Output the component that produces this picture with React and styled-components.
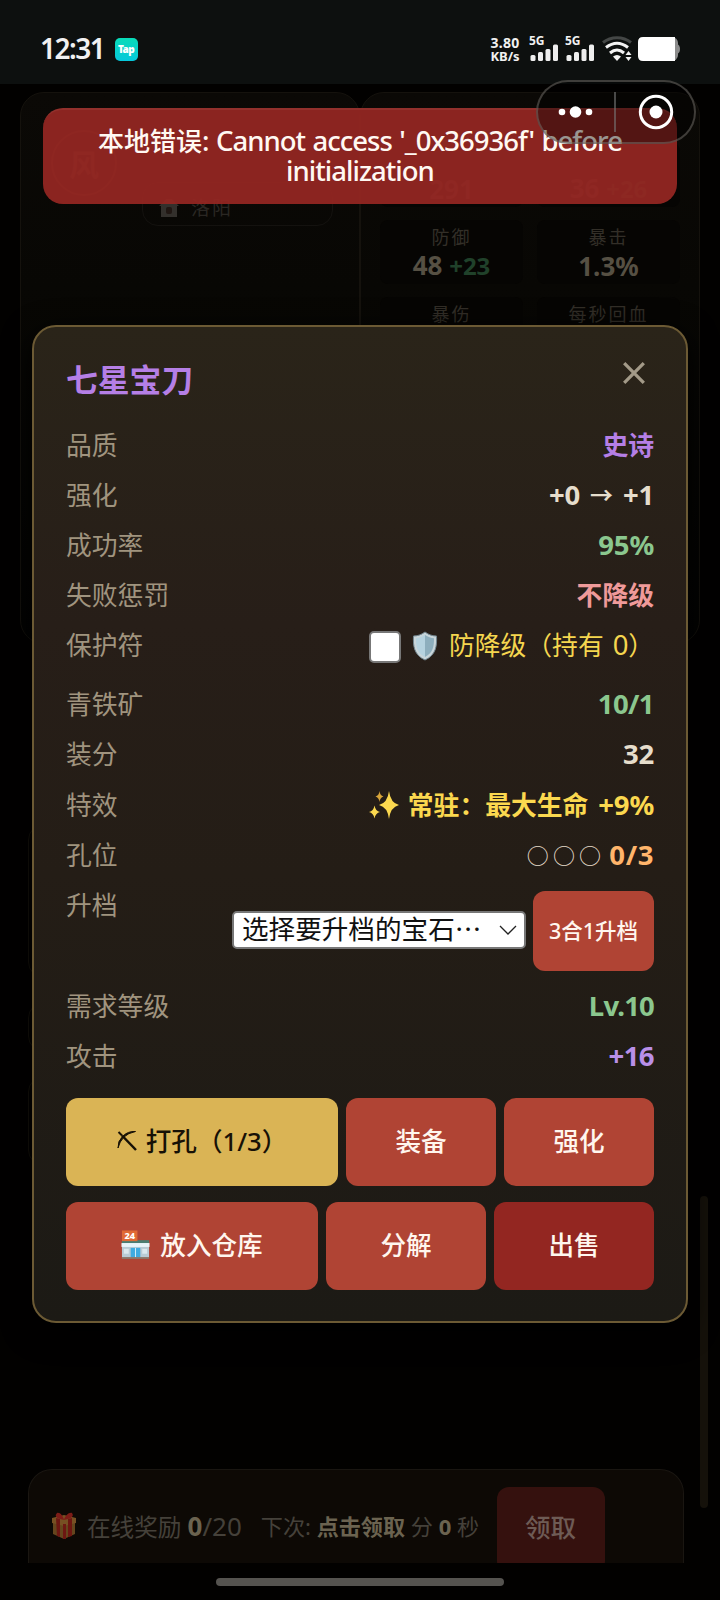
import React from "react";
import styled, { createGlobalStyle } from "styled-components";

const Global = createGlobalStyle`
  * { box-sizing: border-box; }
  body { margin: 0; background: #020100; }
  body, button { font-family: "Noto Sans", "Noto Sans CJK SC", sans-serif; }
`;

const Screen = styled.div`
  position: relative;
  display: flex;
  flex-direction: column;
  width: 720px;
  height: 1600px;
  overflow: hidden;
  background: #020100;
  color: #e6ddcc;
`;

/* ---------- status bar ---------- */
const StatusBar = styled.header`
  flex: none;
  display: flex;
  align-items: center;
  height: 84px;
  padding: 14px 40px 0 40px;
  background: #0d100f;
  color: #f1f1f1;
`;
const Clock = styled.span`
  width: 74.5px;
  font-size: 28px;
  line-height: 28px;
  margin-top: -2px;
  font-weight: 600;
  letter-spacing: -1.5px;
  white-space: nowrap;
`;
const TapBadge = styled.span`
  display: flex;
  align-items: center;
  justify-content: center;
  width: 23px;
  height: 23px;
  border-radius: 5px;
  background: linear-gradient(#08dcb8, #06c8dc);
  color: #fff;
  font-size: 10px;
  font-weight: 900;
  letter-spacing: -0.6px;
`;
const StatusRight = styled.div`
  display: flex;
  align-items: center;
  margin-left: auto;
`;
const NetSpeed = styled.span`
  display: flex;
  flex-direction: column;
  align-items: center;
  gap: 1px;
  width: 34px;
  margin-right: 7px;
  font-size: 13px;
  font-weight: 700;
  line-height: 13px;
  white-space: nowrap;
`;
const SpeedValue = styled.span`
  font-size: 14px;
  letter-spacing: 0.2px;
`;
const Signal = styled.div`
  display: flex;
  flex-direction: column;
  width: 30px;
  height: 28px;
  margin-right: 6px;
  font-size: 12px;
  font-weight: 700;
  line-height: 11px;
`;
const SignalSvg = styled.svg`
  width: 30px;
  height: 18px;
  margin-top: -2px;
`;
const WifiSvg = styled.svg`
  width: 32px;
  height: 26px;
  margin-right: 4px;
`;
const BatterySvg = styled.svg`
  width: 43px;
  height: 26px;
`;

/* ---------- dimmed page behind the dialog ---------- */
const Page = styled.main`
  flex: 1;
  min-height: 0;
  display: flex;
  flex-direction: column;
  padding: 8px 20px 0;
  overflow: hidden;
`;
const TopCards = styled.div`
  display: grid;
  grid-template-columns: 1fr 1fr;
  height: 552px;
`;
const DimCard = styled.section`
  border: 1.5px solid #15120d;
  border-radius: 24px;
  background: linear-gradient(#0b0906, #080704 35%, #030302);
`;
const Profile = styled(DimCard)`
  padding: 37px 26px 0 30px;
  display: flex;
  gap: 25px;
`;
const Avatar = styled.span`
  display: flex;
  align-items: center;
  justify-content: center;
  width: 66px;
  height: 66px;
  border: 2px solid #33271a;
  border-radius: 50%;
  color: #40352a;
  font-size: 30px;
  font-weight: 700;
`;
const ProfileInfo = styled.div`
  flex: 1;
  display: flex;
  flex-direction: column;
  justify-content: flex-end;
  height: 96px;
`;
const CityPill = styled.div`
  display: flex;
  align-items: center;
  gap: 12px;
  height: 44px;
  padding: 7px 16px 0;
  border: 1.5px solid #14120f;
  border-radius: 16px;
  color: #2a2723;
  font-size: 19px;
  line-height: 24px;
  letter-spacing: 2px;
`;
const Stats = styled(DimCard)`
  display: grid;
  grid-template-columns: 143px 143px;
  grid-auto-rows: 64px;
  align-content: start;
  justify-content: center;
  gap: 13px 14px;
  padding-top: 50px;
`;
const StatTile = styled.div`
  display: flex;
  flex-direction: column;
  height: 64px;
  border-radius: 8px;
  background: #060503;
  text-align: center;
`;
const StatLabel = styled.div`
  padding-top: 5px;
  color: #332f28;
  font-size: 18px;
  line-height: 24px;
  letter-spacing: 2px;
`;
const StatValue = styled.div`
  margin-top: auto;
  padding-bottom: 2px;
  color: ${(p) => (p.$dim ? "#403a31" : "#565043")};
  font-size: 26px;
  font-weight: 700;
  line-height: 32px;
`;
const Bonus = styled.span`
  color: #20412a;
  font-size: 24px;
`;
const BagList = styled.div`
  display: flex;
  flex-direction: column;
  gap: 24px;
  margin: 180px 28px 0 8px;
`;
const BagSlot = styled.div`
  height: ${(p) => p.$h}px;
  border: 1px solid #17130c;
  border-radius: 16px;
`;
const RewardBar = styled.section`
  flex: none;
  display: flex;
  align-items: flex-start;
  height: 94px;
  margin: auto 16px 37px 8px;
  padding: 17px 22px 0 22px;
  border: 1.5px solid #1a1611;
  border-bottom: 0;
  border-radius: 24px 24px 0 0;
  background: #0d0905;
  color: #45413a;
  overflow: hidden;
`;
const RewardText = styled.span`
  margin-left: ${(p) => p.$ml || 0}px;
  font-size: ${(p) => p.$size}px;
  line-height: 79px;
  white-space: nowrap;
`;
const RewardNum = styled.span`
  font-size: 26px;
`;
const Strong = styled.b`
  color: #6b6350;
`;
const ClaimButton = styled.button`
  width: 108px;
  height: 86px;
  margin-left: auto;
  margin-right: 56.5px;
  border: 0;
  border-radius: 12px;
  background: #35110e;
  color: #6e5b55;
  font-size: 25.5px;
  font-weight: 500;
  padding: 0 0 10px 0;
`;
const ScrollThumb = styled.div`
  position: absolute;
  left: 700px;
  top: 1196px;
  width: 8px;
  height: 312px;
  border-radius: 4px;
  background: #15110a;
`;
const HomeIndicator = styled.div`
  position: absolute;
  left: 216px;
  bottom: 14px;
  width: 288px;
  height: 8px;
  border-radius: 4px;
  background: #55534f;
`;

/* ---------- toast and host capsule ---------- */
const Toast = styled.div`
  position: absolute;
  left: 43px;
  top: 108px;
  width: 634px;
  height: 96px;
  padding-top: 15.5px;
  border-top: 2px solid #93302c;
  border-radius: 20px;
  background: rgba(148, 38, 34, 0.94);
  color: #fff8f2;
  font-size: 26px;
  font-weight: 500;
  text-align: center;
`;
const ToastLine = styled.div`
  height: 30.5px;
  line-height: 30px;
  white-space: nowrap;
`;
const ToastLatin = styled.span`
  font-size: 27.5px;
  letter-spacing: -0.98px;
  word-spacing: 1.2px;
`;
const Capsule = styled.div`
  position: absolute;
  left: 536px;
  top: 80px;
  display: flex;
  align-items: center;
  width: 160px;
  height: 64px;
  border: 2px solid rgba(120, 115, 110, 0.5);
  border-radius: 32px;
  background: rgba(0, 0, 0, 0.4);
`;

/* ---------- dialog ---------- */
const Dialog = styled.section`
  position: absolute;
  left: 32px;
  top: 325px;
  width: 656px;
  height: 998px;
  padding: 30px 32px 0;
  border: 2px solid #6c5a34;
  border-radius: 24px;
  background: linear-gradient(#2a2419, #271e18 30%, #241d16 55%, #1c1a15);
  box-shadow: 0 8px 30px #000;
`;
const DialogHead = styled.div`
  display: flex;
  justify-content: space-between;
  height: 62.5px;
`;
const Title = styled.h2`
  margin: 0;
  color: #b57fe6;
  font-size: 31.8px;
  font-weight: 700;
  line-height: 46.5px;
`;
const CloseSvg = styled.svg`
  width: 22px;
  height: 22px;
  margin: 5px 9px 0 0;
`;
const Row = styled.div`
  display: flex;
  justify-content: space-between;
  height: ${(p) => p.$h || 50.2}px;
  font-size: 25.8px;
  line-height: 50px;
  white-space: nowrap;
`;
const Label = styled.span`
  color: #a0947f;
`;
const Value = styled.span`
  display: flex;
  align-items: center;
  height: 50px;
  color: ${(p) => p.$color || "#e6ddcc"};
  font-weight: ${(p) => p.$weight || 700};
`;
const Num = styled.span`
  font-size: 27.5px;
  letter-spacing: ${(p) => p.$ls ?? -0.2}px;
  word-spacing: ${(p) => p.$ws || 0}px;
  white-space: pre;
`;
const Arrow = styled.span`
  width: 43px;
  font-size: 23px;
  text-align: center;
`;
const Check = styled.span`
  width: 32px;
  height: 32px;
  margin-top: 4px;
  border: 2px solid #777;
  border-radius: 5px;
  background: #fff;
`;
const Slots = styled.span`
  margin: -2px 4px 0 0;
  color: #e6ddcc;
  font-family: "Noto Sans CJK SC", sans-serif;
  font-size: 22px;
  font-weight: 400;
  letter-spacing: 4.2px;
`;
const UpgradeControls = styled.div`
  display: flex;
  align-items: center;
  gap: 7px;
  height: 102px;
`;
const GemSelect = styled.div`
  display: flex;
  align-items: center;
  justify-content: space-between;
  width: 294px;
  height: 38px;
  margin-top: -3px;
  padding: 0 7px 0 8px;
  border: 2px solid #777;
  border-radius: 5px;
  background: #fff;
  color: #111;
  font-family: "Noto Sans CJK SC", sans-serif;
  font-size: 26.6px;
  line-height: 32px;
`;
const GemText = styled.span`
  margin-top: -4px;
`;
const Actions = styled.div`
  display: flex;
  gap: 8px;
  margin-bottom: 16px;
`;
const tones = {
  red: ["#b04434", "#fff6ee"],
  dark: ["#932621", "#fff6ee"],
  gold: ["#dab455", "#171106"],
};
const Button = styled.button`
  display: flex;
  align-items: center;
  justify-content: center;
  gap: 8px;
  width: ${(p) => p.$w}px;
  height: ${(p) => p.$h || 88}px;
  padding: 0 0 4px;
  border: 0;
  border-radius: 12px;
  background: ${(p) => tones[p.$tone || "red"][0]};
  color: ${(p) => tones[p.$tone || "red"][1]};
  font-size: ${(p) => p.$size || 25.6}px;
  font-weight: 500;
  white-space: nowrap;
`;
const Icon = styled.svg`
  flex: none;
  width: ${(p) => p.$w}px;
  height: ${(p) => p.$h}px;
  margin: ${(p) => p.$m || "0"};
`;

const SignalMeter = () => (
  <Signal>
    5G
    <SignalSvg viewBox="0 0 30 18" fill="#eee">
      <rect x="1.5" y="11" width="5" height="6" rx="1.5" />
      <rect x="9" y="8" width="5" height="9" rx="1.5" />
      <rect x="16.5" y="5" width="5" height="12" rx="1.5" />
      <rect x="24" y="0.500" width="5" height="16.500" rx="1.5" />
    </SignalSvg>
  </Signal>
);

const Wifi = () => (
  <WifiSvg viewBox="0 0 32 26" fill="none" strokeWidth="3">
    <path d="M2 6.5C10 0 22 0 30 6.5" stroke="#444746" />
    <path d="M5 11.5Q16 3 27 11.5" stroke="#f3f3f3" />
    <path d="M9 17Q16 11 23 17" stroke="#f3f3f3" />
    <path d="M12 20.500Q16 17.500 20 20.500L16 25Z" fill="#f3f3f3" />
    <path d="M24.5 19L27.5 15L30.5 19ZM24.5 21L27.5 25L30.5 21Z" fill="#f3f3f3" />
  </WifiSvg>
);

const Battery = () => (
  <BatterySvg viewBox="0 0 43 26">
    <rect x="5" y="1" width="36" height="24" rx="6" fill="#8c8c8c" />
    <path d="M40 8q3 1 3 5t-3 5z" fill="#8c8c8c" />
    <path d="M6 1H38V25H6q-5 0-5-5V6q0-5 5-5Z" fill="#fff" />
  </BatterySvg>
);

const Shield = () => (
  <Icon $w={26} $h={30} $m="1px 11px 0 11px" viewBox="0 0 26 30">
    <path d="M13 1C9 4 5 5 1.5 5C1 15 2 24 13 29C24 24 25 15 24.500 5C21 5 17 4 13 1Z" fill="#c8d5da" stroke="#71858f" strokeWidth="1" />
    <path d="M13 4C10 6 7 7 4 7.300C4 16 5 22 13 26Z" fill="#b5d2df" />
    <path d="M13 4C16 6 19 7 22 7.300C22 16 21 22 13 26Z" fill="#8daebd" />
  </Icon>
);

const Sparkles = () => (
  <Icon $w={30} $h={30} $m="0 9px 0 0" viewBox="0 0 30 30" fill="#fbd84f">
    <path d="M20 1Q21.500 13 30 15Q21.500 17 20 29Q18.500 17 10 15Q18.500 13 20 1Z" />
    <path d="M10.500 1Q11 5.500 14.500 6.500Q11 7.500 10.500 12Q10 7.500 6.500 6.500Q10 5.500 10.500 1Z" fill="#d8a53a" />
    <path d="M5.500 15.500Q6.500 21 11 22Q6.500 23 5.500 28.500Q4.500 23 0 22Q4.500 21 5.500 15.500Z" />
  </Icon>
);

const Pickaxe = () => (
  <Icon $w={21} $h={21} viewBox="0 0 21 21" fill="none" stroke="#171106">
    <path d="M5 5.500L19 20" strokeWidth="2.500" />
    <path d="M1.500 2L5 5.500" strokeWidth="2" />
    <path d="M1 18Q.5 11 6 6Q11 1 18.500 1.500Q11 3 7 7Q2.500 11.500 1 18Z" fill="#171106" strokeWidth="1" />
  </Icon>
);

const Store = () => (
  <Icon $w={29} $h={30} $m="2px 2px 0 0" viewBox="0 0 30 30">
    <rect x="1" y="12" width="28" height="17" fill="#b9cbd5" />
    <rect x="1" y="10" width="28" height="3" fill="#4b7d72" />
    <rect x="0.500" y="13" width="29" height="4" fill="#e8f4fa" />
    <rect x="10" y="18" width="10" height="10" fill="#3fabe0" />
    <path d="M15 18v10" stroke="#d6edf7" />
    <rect x="3" y="19" width="5" height="5" fill="#dbe8ee" />
    <rect x="22" y="19" width="5" height="5" fill="#dbe8ee" />
    <rect x="1" y="27.500" width="28" height="2" fill="#8b7568" />
    <rect x="1" y="0" width="16" height="11" fill="#e06a35" />
    <text x="9" y="8.800" fontSize="9.500" fontWeight="800" textAnchor="middle" fill="#fff" fontFamily="Noto Sans">24</text>
  </Icon>
);

const Gift = () => (
  <Icon $w={26} $h={28} $m="25px 10px 0 0" viewBox="0 0 26 28">
    <path d="M2 9L13 12L24 9V22L13 27L2 22Z" fill="#65451d" />
    <path d="M1 6L13 3L25 6V11L13 14L1 11Z" fill="#775023" />
    <path d="M5 6L9 7V25L6 24ZM17 7L21 6V24L17 25ZM12 12h3v15h-3z" fill="#6d1712" />
    <path d="M13 8C8 7 2 5 6 1C9 0 12 4 13 8C14 4 18 0 21 1C24 5 18 7 13 8Z" fill="#7d1c17" />
  </Icon>
);

const House = () => (
  <svg width="20" height="20" viewBox="0 0 20 20">
    <path d="M0 8L7 1H13L20 8H18V19H2V8Z" fill="#33302c" />
    <rect x="7" y="9" width="6" height="7" rx="2" fill="#211713" />
  </svg>
);

const stats = [
  { id: "hp", value: "291", dim: true },
  { id: "atk", value: "36", bonus: "+26", dim: true },
  { id: "def", label: "防御", value: "48", bonus: "+23" },
  { id: "crit", label: "暴击", value: "1.3%" },
  { id: "critDamage", label: "暴伤" },
  { id: "regen", label: "每秒回血" },
];

export default function App() {
  return (
    <Screen>
      <Global />
      <StatusBar>
        <Clock>12:31</Clock>
        <TapBadge>Tap</TapBadge>
        <StatusRight>
          <NetSpeed>
            <SpeedValue>3.80</SpeedValue>
            <span>KB/s</span>
          </NetSpeed>
          <SignalMeter />
          <SignalMeter />
          <Wifi />
          <Battery />
        </StatusRight>
      </StatusBar>

      <Page>
        <TopCards>
          <Profile>
            <Avatar>风</Avatar>
            <ProfileInfo>
              <CityPill><House />洛阳</CityPill>
            </ProfileInfo>
          </Profile>
          <Stats>
            {stats.map(({ id, label, value, bonus, dim }) => (
              <StatTile key={id}>
                {label && <StatLabel>{label}</StatLabel>}
                {value && (
                  <StatValue $dim={dim}>
                    {value} {bonus && <Bonus>{bonus}</Bonus>}
                  </StatValue>
                )}
              </StatTile>
            ))}
          </Stats>
        </TopCards>
        <BagList>
          <BagSlot $h={154} />
          <BagSlot $h={50} />
          <BagSlot $h={90} />
        </BagList>
        <RewardBar>
          <Gift />
          <RewardText $size={23.6}>在线奖励 <RewardNum><Strong>0</Strong>/20</RewardNum></RewardText>
          <RewardText $size={22.1} $ml={19}>下次: <Strong>点击领取</Strong> 分 <Strong>0</Strong> 秒</RewardText>
          <ClaimButton>领取</ClaimButton>
        </RewardBar>
      </Page>
      <ScrollThumb />
      <HomeIndicator />

      <Toast>
        <ToastLine>本地错误<ToastLatin>: Cannot access '_0x36936f' before</ToastLatin></ToastLine>
        <ToastLine><ToastLatin>initialization</ToastLatin></ToastLine>
      </Toast>
      <Capsule>
        <svg width="156" height="60" viewBox="0 0 156 60">
          <g fill="#fff">
            <circle cx="24" cy="30" r="3.300" />
            <circle cx="37.500" cy="30" r="5.800" />
            <circle cx="51" cy="30" r="3.300" />
            <circle cx="118" cy="30" r="6.500" />
          </g>
          <circle cx="118" cy="30" r="15.700" fill="none" stroke="#fff" strokeWidth="3" />
          <path d="M77 10V50" stroke="#777" strokeOpacity=".6" strokeWidth="2" />
        </svg>
      </Capsule>

      <Dialog>
        <DialogHead>
          <Title>七星宝刀</Title>
          <CloseSvg viewBox="0 0 22 22">
            <path d="M1.200 1.200L20.800 20.800M20.800 1.200L1.200 20.800" stroke="#a39a88" strokeWidth="3.300" />
          </CloseSvg>
        </DialogHead>
        <Row><Label>品质</Label><Value $color="#b57fe6">史诗</Value></Row>
        <Row><Label>强化</Label><Value><Num>+0</Num><Arrow>→</Arrow><Num>+1</Num></Value></Row>
        <Row><Label>成功率</Label><Value $color="#8bc78e"><Num>95%</Num></Value></Row>
        <Row><Label>失败惩罚</Label><Value $color="#ef9a9a">不降级</Value></Row>
        <Row $h={59}>
          <Label>保护符</Label>
          <Value $color="#f5d64f" $weight={400}><Check /><Shield />防降级（持有<Num $ws={2}> 0</Num>）</Value>
        </Row>
        <Row><Label>青铁矿</Label><Value $color="#8bc78e"><Num $ls={-0.6}>10/1</Num></Value></Row>
        <Row><Label>装分</Label><Value><Num>32</Num></Value></Row>
        <Row><Label>特效</Label><Value $color="#fbd84f"><Sparkles />常驻：最大生命<Num $ws={3}> +9%</Num></Value></Row>
        <Row><Label>孔位</Label><Value $color="#ffb56b"><Slots>○○○</Slots><Num $ls={0.6}>0/3</Num></Value></Row>
        <Row $h={100.6}>
          <Label>升档</Label>
          <UpgradeControls>
            <GemSelect>
              <GemText>选择要升档的宝石…</GemText>
              <svg width="18" height="10" viewBox="0 0 18 10">
                <path d="M1 1L9 9L17 1" fill="none" stroke="#222" strokeWidth="1.300" />
              </svg>
            </GemSelect>
            <Button $w={121} $h={80} $size={21.5}>3合1升档</Button>
          </UpgradeControls>
        </Row>
        <Row><Label>需求等级</Label><Value $color="#8bc78e"><Num $ls={-0.8}>Lv.10</Num></Value></Row>
        <Row $h={67.5}><Label>攻击</Label><Value $color="#b98fe8"><Num $ls={-0.6}>+16</Num></Value></Row>
        <Actions>
          <Button $w={272} $tone="gold"><Pickaxe />打孔（1/3）</Button>
          <Button $w={150}>装备</Button>
          <Button $w={150}>强化</Button>
        </Actions>
        <Actions>
          <Button $w={252}><Store />放入仓库</Button>
          <Button $w={160}>分解</Button>
          <Button $w={160} $tone="dark">出售</Button>
        </Actions>
      </Dialog>
    </Screen>
  );
}
